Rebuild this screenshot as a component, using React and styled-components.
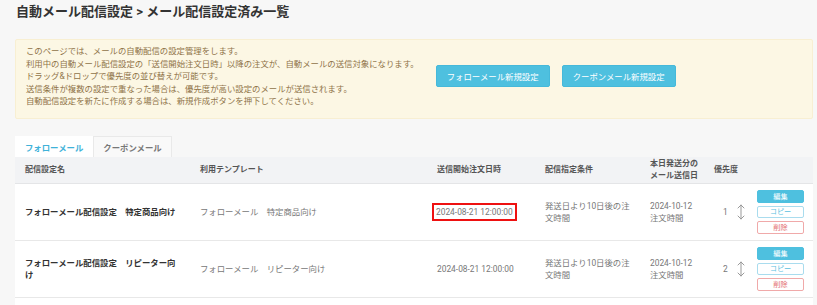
import React from "react";
import styled, { createGlobalStyle } from "styled-components";

const Global = createGlobalStyle`
  html, body { margin: 0; padding: 0; background: #f7f7f7; }
  body { font-family: Roboto, "Noto Sans CJK JP", sans-serif; color: #333; }
`;

const Page = styled.div`
  padding: 4px 4px 0 15px;
`;

const Title = styled.h1`
  margin: 0 0 19px 1px;
  font-size: 13px;
  line-height: 16px;
  font-weight: 700;
  color: #333;
`;

const InfoBox = styled.div`
  display: flex;
  align-items: center;
  gap: 17px;
  padding: 5px 10px 10px;
  background: #fcf7e4;
  border: 1px solid #f8efd2;
  border-radius: 2px;
`;

const InfoText = styled.div`
  font-size: 8.4px;
  line-height: 12.6px;
  color: #8f7348;
`;

const BtnGroup = styled.div`
  display: flex;
  gap: 12px;
`;

const PrimaryBtn = styled.button`
  width: 114px;
  height: 22px;
  border: 1px solid #46b9da;
  border-radius: 2px;
  background: #4ec0df;
  color: #fff;
  font-family: inherit;
  font-size: 8.4px;
  padding: 0;
`;

const Tabs = styled.div`
  display: flex;
  margin-top: 17px;
`;

const Tab = styled.div`
  height: 21px;
  padding: 0 9px;
  display: flex;
  align-items: center;
  font-size: 8.4px;
  font-weight: 700;
  box-sizing: border-box;
  color: ${(p) => (p.$active ? "#3fb2d9" : "#777")};
  background: ${(p) => (p.$active ? "#fff" : "#f9f9f9")};
  border: 1px solid ${(p) => (p.$active ? "#fff" : "#e9e9e9")};
  border-bottom: none;
`;

const Table = styled.div`
  background: #fff;
`;

const cols = "175px 237px 108px 105px 64px 43px 66px";

const HeadRow = styled.div`
  display: grid;
  grid-template-columns: ${cols};
  min-height: 26px;
  background: #f2f3f5;
  border-bottom: 1px solid #e4e5e7;
  align-items: center;
`;

const HeadCell = styled.div`
  padding-left: 10px;
  font-size: 8px;
  line-height: 11.5px;
  font-weight: 700;
  color: #555;
`;

const Row = styled.div`
  display: grid;
  grid-template-columns: ${cols};
  min-height: 56px;
  border-bottom: 1px solid #e8e8e8;
  align-items: center;
`;

const Cell = styled.div`
  padding-left: 10px;
  font-size: 8.4px;
  line-height: 12px;
  color: #777;
`;

const NameCell = styled(Cell)`
  width: 155px;
  font-weight: 700;
  color: #333;
`;

const CondText = styled.div`
  width: 89px;
`;

const DateText = styled.span`
  display: inline-block;
  color: #777;
  ${(p) =>
    p.$highlight &&
    `
    border: 2px solid #ee1111;
    padding: 1px 2px;
    margin-left: -5px;
  `}
`;

const PriorityCell = styled.div`
  display: flex;
  align-items: center;
  gap: 9px;
  padding-left: 19px;
  font-size: 8.4px;
  color: #777;
`;

const Actions = styled.div`
  display: flex;
  flex-direction: column;
  gap: 3px;
  padding: 6px 0 6px 10px;
`;

const SmallBtn = styled.button`
  width: 47px;
  height: 12.5px;
  padding: 0;
  border-radius: 2px;
  font-family: inherit;
  font-size: 7.2px;
  line-height: 1;
  box-sizing: border-box;
  ${(p) =>
    p.$kind === "edit"
      ? `background:#4ec0df;border:1px solid #4ec0df;color:#fff;`
      : p.$kind === "copy"
      ? `background:#fff;border:1px solid #a9dcee;color:#5bbfe0;`
      : `background:#fff;border:1px solid #f0a9a9;color:#e36f6f;`}
`;

const UpDown = () => (
  <svg width="8" height="16" viewBox="0 0 8 16" fill="none" stroke="#999" strokeWidth="1" strokeLinecap="round" strokeLinejoin="round">
    <path d="M4 1 V15" />
    <path d="M1 4 L4 1 L7 4" />
    <path d="M1 12 L4 15 L7 12" />
  </svg>
);

const rows = [
  { name: "フォローメール配信設定　特定商品向け", tpl: "フォローメール　特定商品向け", hl: true, pr: 1 },
  { name: "フォローメール配信設定　リピーター向け", tpl: "フォローメール　リピーター向け", hl: false, pr: 2 },
];

export default function App() {
  return (
    <>
      <Global />
      <Page>
        <Title>自動メール配信設定 &gt; メール配信設定済み一覧</Title>
        <InfoBox>
          <InfoText>
            このページでは、メールの自動配信の設定管理をします。
            <br />
            利用中の自動メール配信設定の「送信開始注文日時」以降の注文が、自動メールの送信対象になります。
            <br />
            ドラッグ&amp;ドロップで優先度の並び替えが可能です。
            <br />
            送信条件が複数の設定で重なった場合は、優先度が高い設定のメールが送信されます。
            <br />
            自動配信設定を新たに作成する場合は、新規作成ボタンを押下してください。
          </InfoText>
          <BtnGroup>
            <PrimaryBtn>フォローメール新規設定</PrimaryBtn>
            <PrimaryBtn>クーポンメール新規設定</PrimaryBtn>
          </BtnGroup>
        </InfoBox>
        <Tabs>
          <Tab $active>フォローメール</Tab>
          <Tab>クーポンメール</Tab>
        </Tabs>
        <Table>
          <HeadRow>
            <HeadCell>配信設定名</HeadCell>
            <HeadCell>利用テンプレート</HeadCell>
            <HeadCell>送信開始注文日時</HeadCell>
            <HeadCell>配信指定条件</HeadCell>
            <HeadCell>
              本日発送分の
              <br />
              メール送信日
            </HeadCell>
            <HeadCell>優先度</HeadCell>
            <HeadCell />
          </HeadRow>
          {rows.map((r) => (
            <Row key={r.pr}>
              <NameCell>{r.name}</NameCell>
              <Cell>{r.tpl}</Cell>
              <Cell>
                <DateText $highlight={r.hl}>2024-08-21 12:00:00</DateText>
              </Cell>
              <Cell>
                <CondText>発送日より10日後の注文時間</CondText>
              </Cell>
              <Cell>
                2024-10-12
                <br />
                注文時間
              </Cell>
              <PriorityCell>
                <span>{r.pr}</span>
                <UpDown />
              </PriorityCell>
              <Actions>
                <SmallBtn $kind="edit">編集</SmallBtn>
                <SmallBtn $kind="copy">コピー</SmallBtn>
                <SmallBtn $kind="del">削除</SmallBtn>
              </Actions>
            </Row>
          ))}
          <Row>
            <NameCell />
            <Cell />
            <Cell />
            <Cell />
            <Cell />
            <PriorityCell />
            <Actions>
              <SmallBtn $kind="edit">編集</SmallBtn>
            </Actions>
          </Row>
        </Table>
      </Page>
    </>
  );
}
